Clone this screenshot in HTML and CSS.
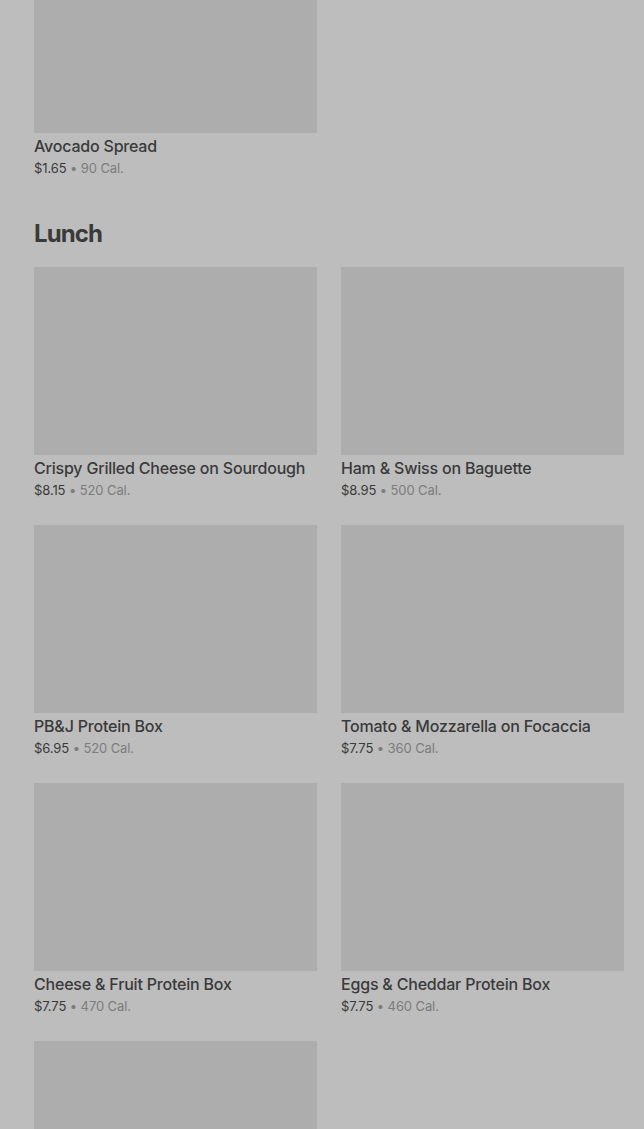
FILE: index.html
```html
<!DOCTYPE html>
<html>
  <head>
    <title>Menu</title>
    <link rel="stylesheet" href="styles.css">
  </head>
  <body>
    <div class="menu">
      <div class="section first">
        <div class="grid">
          <div class="item">
            <div class="photo"></div>
            <div class="name">Avocado Spread</div>
            <div class="meta"><span class="price">$1.65</span> • 90 Cal.</div>
          </div>
        </div>
      </div>

      <div class="section">
        <h2 class="section_title">Lunch</h2>
        <div class="grid">
          <div class="item">
            <div class="photo"></div>
            <div class="name">Crispy Grilled Cheese on Sourdough</div>
            <div class="meta"><span class="price">$8.15</span> • 520 Cal.</div>
          </div>
          <div class="item">
            <div class="photo"></div>
            <div class="name">Ham &amp; Swiss on Baguette</div>
            <div class="meta"><span class="price">$8.95</span> • 500 Cal.</div>
          </div>
          <div class="item">
            <div class="photo"></div>
            <div class="name">PB&amp;J Protein Box</div>
            <div class="meta"><span class="price">$6.95</span> • 520 Cal.</div>
          </div>
          <div class="item">
            <div class="photo"></div>
            <div class="name">Tomato &amp; Mozzarella on Focaccia</div>
            <div class="meta"><span class="price">$7.75</span> • 360 Cal.</div>
          </div>
          <div class="item">
            <div class="photo"></div>
            <div class="name">Cheese &amp; Fruit Protein Box</div>
            <div class="meta"><span class="price">$7.75</span> • 470 Cal.</div>
          </div>
          <div class="item">
            <div class="photo"></div>
            <div class="name">Eggs &amp; Cheddar Protein Box</div>
            <div class="meta"><span class="price">$7.75</span> • 460 Cal.</div>
          </div>
          <div class="item">
            <div class="photo"></div>
          </div>
        </div>
      </div>
    </div>
  </body>
</html>
```

FILE: styles.css
```css
* {
  padding: 0;
  margin: 0;
  box-sizing: border-box;
  font-family: Inter, Roboto, "Liberation Sans", sans-serif;
}

html,
body {
  background: #bdbdbd;
  overflow: hidden;
}

.menu {
  padding: 0 20px 0 34px;
  margin-top: -55px;
}

.section {
  margin-bottom: 39px;
}

.section_title {
  font-size: 24px;
  line-height: 32px;
  font-weight: 700;
  letter-spacing: -0.9px;
  color: #3a3a3a;
  margin-bottom: 17px;
}

.grid {
  display: grid;
  grid-template-columns: 283px 283px;
  column-gap: 24px;
  row-gap: 24px;
}

.photo {
  height: 188px;
  background: #adadad;
  margin-bottom: 2px;
}

.name {
  font-size: 16px;
  line-height: 22px;
  font-weight: 500;
  letter-spacing: -0.2px;
  color: #3a3a3a;
  white-space: nowrap;
}

.meta {
  font-size: 13px;
  line-height: 22px;
  letter-spacing: -0.1px;
  color: #7c7c7c;
}

.price {
  color: #3a3a3a;
}
```
